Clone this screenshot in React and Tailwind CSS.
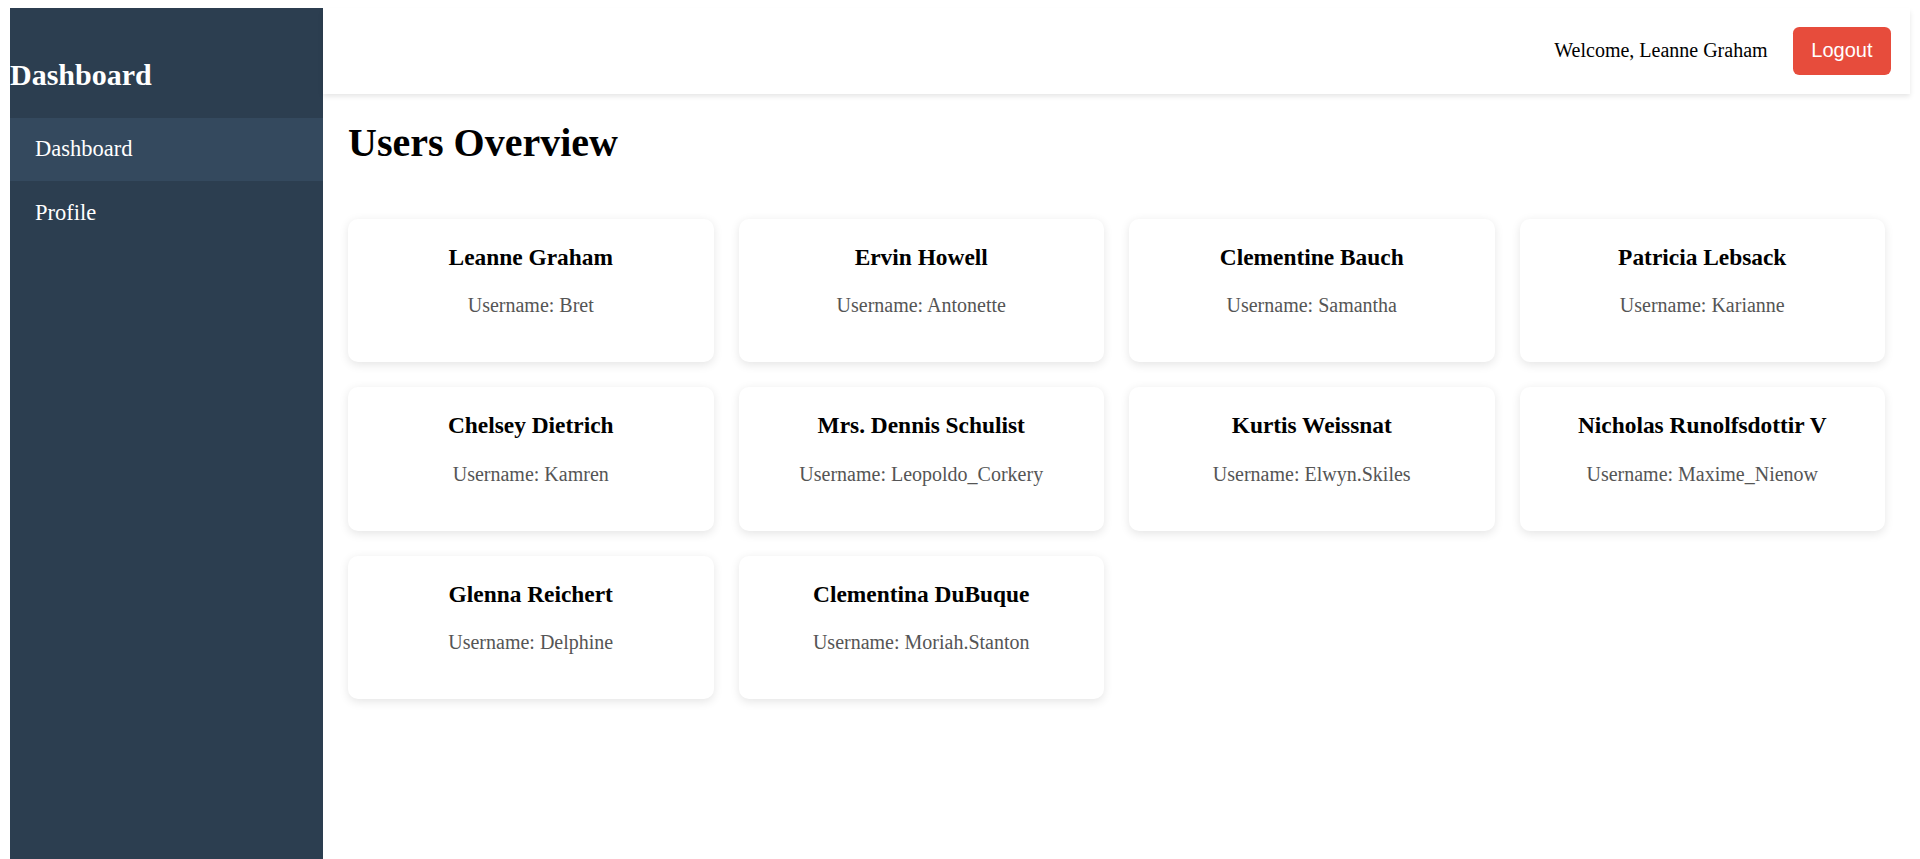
import React from "react";

const users = [
  { name: "Leanne Graham", username: "Bret" },
  { name: "Ervin Howell", username: "Antonette" },
  { name: "Clementine Bauch", username: "Samantha" },
  { name: "Patricia Lebsack", username: "Karianne" },
  { name: "Chelsey Dietrich", username: "Kamren" },
  { name: "Mrs. Dennis Schulist", username: "Leopoldo_Corkery" },
  { name: "Kurtis Weissnat", username: "Elwyn.Skiles" },
  { name: "Nicholas Runolfsdottir V", username: "Maxime_Nienow" },
  { name: "Glenna Reichert", username: "Delphine" },
  { name: "Clementina DuBuque", username: "Moriah.Stanton" },
];

export default function App() {
  return (
    <div className="flex pt-[8px] px-[10px] font-['Liberation_Serif','Times_New_Roman',serif] text-black bg-white h-[859px] overflow-hidden">
      <aside className="w-[313px] shrink-0 h-[851px] bg-[#2c3e50] text-white pt-[25px]">
        <h2 className="text-[30px] font-bold leading-[1.15] my-[25px]">Dashboard</h2>
        <ul>
          <li className="px-[25px] py-[18.75px] text-[22.5px] leading-[1.15] bg-[#34495e]">Dashboard</li>
          <li className="px-[25px] py-[18.75px] text-[22.5px] leading-[1.15]">Profile</li>
        </ul>
      </aside>
      <div className="flex-1 flex flex-col min-w-0">
        <header className="flex justify-end items-center bg-white px-[18.75px] py-[18.75px] shadow-[0_2.5px_5px_rgba(0,0,0,0.1)]">
          <span className="text-[20px] leading-[1.15] mr-[25px]">Welcome, Leanne Graham</span>
          <button className="bg-[#e74c3c] text-white font-['Liberation_Sans',Arial,sans-serif] text-[20px] leading-[1.15] px-[18.75px] py-[12.5px] rounded-[6.25px]">
            Logout
          </button>
        </header>
        <main className="px-[25px]">
          <h1 className="text-[40px] font-bold leading-[1.15] mt-[26.8px] mb-[52.7px]">Users Overview</h1>
          <div className="grid grid-cols-4 gap-[25px]">
            {users.map((u) => (
              <div
                key={u.username}
                className="bg-white rounded-[10px] p-[25px] text-center shadow-[0_2.5px_10px_rgba(0,0,0,0.1)]"
              >
                <h3 className="text-[23.4px] font-bold leading-[1.15]">{u.name}</h3>
                <p className="text-[20px] leading-[1.15] text-[#555] mt-[23.4px] mb-[20px]">
                  Username: {u.username}
                </p>
              </div>
            ))}
          </div>
        </main>
      </div>
    </div>
  );
}
